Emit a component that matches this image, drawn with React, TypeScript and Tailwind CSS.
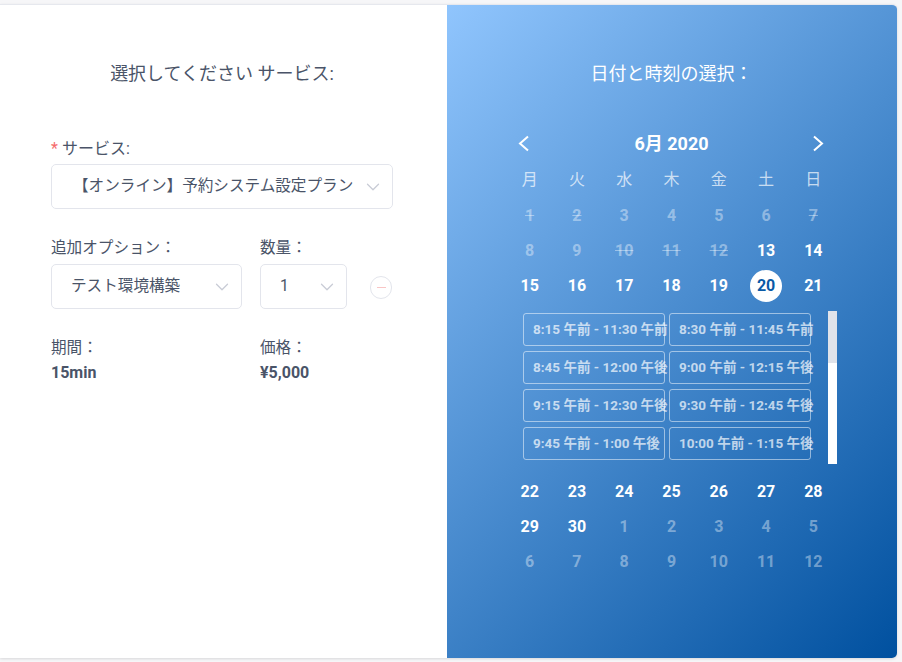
import { ChevronDown } from 'lucide-react'

const font = 'font-[Roboto,"Noto_Sans_CJK_JP",sans-serif]'

const weekdays = ['月', '火', '水', '木', '金', '土', '日']

type Day = { n: number; kind: 'off' | 'struck' | 'on' | 'selected' | 'other' }

const off = (n: number): Day => ({ n, kind: 'off' })
const struck = (n: number): Day => ({ n, kind: 'struck' })
const on = (n: number): Day => ({ n, kind: 'on' })
const other = (n: number): Day => ({ n, kind: 'other' })

const topWeeks: Day[][] = [
  [struck(1), struck(2), off(3), off(4), off(5), off(6), struck(7)],
  [off(8), off(9), struck(10), struck(11), struck(12), on(13), on(14)],
  [on(15), on(16), on(17), on(18), on(19), { n: 20, kind: 'selected' }, on(21)],
]

const bottomWeeks: Day[][] = [
  [on(22), on(23), on(24), on(25), on(26), on(27), on(28)],
  [on(29), on(30), other(1), other(2), other(3), other(4), other(5)],
  [other(6), other(7), other(8), other(9), other(10), other(11), other(12)],
]

const slots = [
  '8:15 午前 - 11:30 午前',
  '8:30 午前 - 11:45 午前',
  '8:45 午前 - 12:00 午後',
  '9:00 午前 - 12:15 午後',
  '9:15 午前 - 12:30 午後',
  '9:30 午前 - 12:45 午後',
  '9:45 午前 - 1:00 午後',
  '10:00 午前 - 1:15 午後',
]

function Select({ text, className }: { text: string; className: string }) {
  return (
    <div className={`flex h-[45px] items-center justify-between rounded-[5px] border border-[#e3e5ec] bg-white pr-[8px] ${className}`}>
      <span className="whitespace-nowrap text-[15.6px] text-[#4a5468]">{text}</span>
      <ChevronDown className="h-[22px] w-[22px] shrink-0 text-[#c9ccd6]" strokeWidth={1.4} />
    </div>
  )
}

function Week({ days }: { days: Day[] }) {
  return (
    <div className="grid h-[35px] grid-cols-7">
      {days.map((d, i) => (
        <div key={i} className="flex items-center justify-center">
          {d.kind === 'selected' ? (
            <span className="flex h-[32px] w-[32px] items-center justify-center rounded-full bg-white text-[16px] font-bold text-[#0a5aa6]">
              {d.n}
            </span>
          ) : (
            <span
              className={
                d.kind === 'on'
                  ? 'text-[16px] font-bold text-white'
                  : d.kind === 'struck'
                    ? 'text-[16px] font-bold text-white/40 line-through'
                    : 'text-[16px] font-bold text-white/40'
              }
            >
              {d.n}
            </span>
          )}
        </div>
      ))}
    </div>
  )
}

export default function App() {
  return (
    <div className={`h-[662px] w-[902px] overflow-hidden bg-[#f6f6f8] pt-[4px] ${font}`}>
      <div className="flex h-[654px] w-[897px] overflow-hidden rounded-r-[5px] border-t border-[#e6e8ee] shadow-[0_1px_3px_rgba(0,0,0,0.12)]">
        {/* service form */}
        <div className="w-[447px] shrink-0 bg-white pl-[51px] pr-[54px]">
          <h2 className="mt-[59px] h-[20px] text-center text-[18px] font-normal leading-[20px] text-[#4a5468]">
            選択してください サービス:
          </h2>
          <div className="mt-[54px] h-[22px] text-[16px] leading-[22px] text-[#4a5468]">
            <span className="mr-[4px] text-[#f56c6c]">*</span>
            サービス:
          </div>
          <Select text="【オンライン】予約システム設定プラン" className="mt-[4px] w-[342px] pl-[21px]" />

          <div className="mt-[28px] flex gap-[18px]">
            <div className="w-[191px]">
              <div className="h-[22px] text-[15.6px] leading-[22px] text-[#4a5468]">追加オプション：</div>
              <Select text="テスト環境構築" className="mt-[5px] pl-[19px]" />
            </div>
            <div className="w-[87px]">
              <div className="h-[22px] text-[15.6px] leading-[22px] text-[#4a5468]">数量：</div>
              <Select text="1" className="mt-[5px] pl-[19px]" />
            </div>
            <div className="ml-[5px] mt-[39px] flex h-[23px] w-[22px] items-center justify-center rounded-full border border-[#e3e5ec]">
              <span className="h-px w-[9px] bg-[#f9c5c5]" />
            </div>
          </div>

          <div className="mt-[28px] flex gap-[18px] text-[#4a5468]">
            <div className="w-[191px]">
              <div className="h-[22px] text-[15.6px] leading-[22px]">期間：</div>
              <div className="mt-[3px] text-[16px] font-bold leading-[22px]">15min</div>
            </div>
            <div>
              <div className="h-[22px] text-[15.6px] leading-[22px]">価格：</div>
              <div className="mt-[3px] text-[16px] font-bold leading-[22px]">¥5,000</div>
            </div>
          </div>
        </div>

        {/* date and time */}
        <div className="flex-1 bg-linear-135/srgb from-[#90c5fd] to-[#00509f] pl-[59px] pr-[61px]">
          <h2 className="mt-[59px] h-[20px] text-center text-[18px] font-normal leading-[20px] text-white">
            日付と時刻の選択：
          </h2>
          <div className="mt-[47px] flex h-[24px] items-center justify-between px-[12px] text-white">
            <svg width="12" height="17" viewBox="0 0 12 17" fill="none" stroke="currentColor" strokeWidth="2">
              <path d="M10 1.5 2 8.5l8 7" />
            </svg>
            <span className="text-[18px] font-bold">6月 2020</span>
            <svg width="12" height="17" viewBox="0 0 12 17" fill="none" stroke="currentColor" strokeWidth="2">
              <path d="M1 1.5 9 8.5l-8 7" />
            </svg>
          </div>
          <div className="mt-[13px] grid h-[24px] grid-cols-7">
            {weekdays.map((w) => (
              <div key={w} className="text-center text-[16px] leading-[24px] text-white/70">
                {w}
              </div>
            ))}
          </div>
          <div className="mt-[6px]">
            {topWeeks.map((w, i) => (
              <Week key={i} days={w} />
            ))}
          </div>

          <div className="mt-[8px] flex h-[153px] pl-[17px]">
            <div className="grid w-[288px] grid-cols-[142px_142px] content-start gap-x-[4px] gap-y-[5px] pt-[2px]">
              {slots.map((s) => (
                <div
                  key={s}
                  className="h-[33px] whitespace-nowrap rounded-[3px] border border-white/50 pl-[9px] text-[13.5px] font-bold leading-[31px] text-white/70"
                >
                  {s}
                </div>
              ))}
            </div>
            <div className="ml-[17px] h-[153px] w-[9px] bg-white">
              <div className="h-[52px] bg-[#e0e3ea]" />
            </div>
          </div>

          <div className="mt-[10px]">
            {bottomWeeks.map((w, i) => (
              <Week key={i} days={w} />
            ))}
          </div>
        </div>
      </div>
    </div>
  )
}
